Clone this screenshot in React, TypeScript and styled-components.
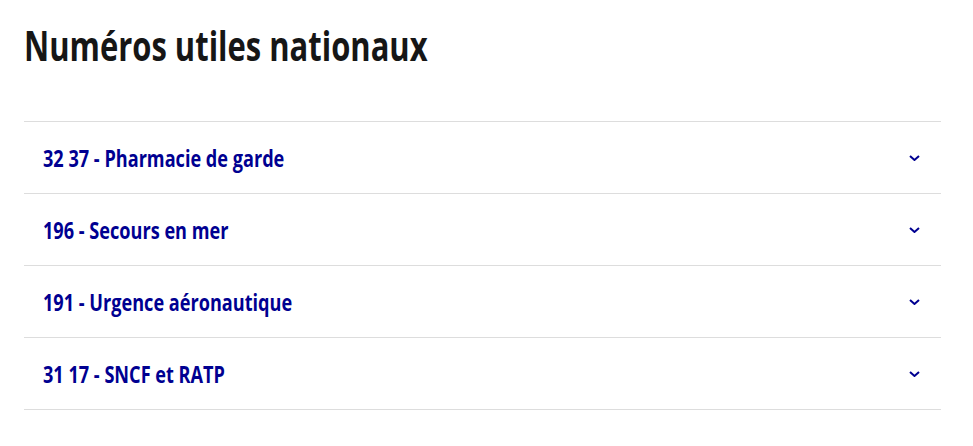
import React from "react";
import styled, { createGlobalStyle } from "styled-components";

const Global = createGlobalStyle`
  html, body { margin: 0; padding: 0; background: #ffffff; }
  body { font-family: "Open Sans", "Liberation Sans", sans-serif; }
`;

const Section = styled.section`
  padding: 21px 32px 0 24px;
`;

const Condensed = styled.span`
  display: inline-block;
  transform: scaleX(0.755);
  transform-origin: left center;
  white-space: nowrap;
`;

const Title = styled.h2`
  margin: 0 0 52px 0;
  font-size: 41px;
  line-height: 48px;
  font-weight: 700;
  color: #161616;
`;

const List = styled.div`
  display: flex;
  flex-direction: column;
  border-bottom: 1px solid #dddddd;
`;

const Row = styled.button`
  display: flex;
  align-items: center;
  justify-content: space-between;
  height: 72px;
  padding: 0 21px 0 19px;
  border: none;
  border-top: 1px solid #dddddd;
  background: transparent;
  font-family: inherit;
  font-size: 24px;
  line-height: 24px;
  font-weight: 700;
  color: #000091;
  text-align: left;
  cursor: pointer;
`;

const Chevron = styled.svg`
  width: 11px;
  height: 6px;
  flex: none;
`;

const items = [
  "32 37 - Pharmacie de garde",
  "196 - Secours en mer",
  "191 - Urgence aéronautique",
  "31 17 - SNCF et RATP",
];

export default function App() {
  return (
    <>
      <Global />
      <Section>
        <Title>
          <Condensed>Numéros utiles nationaux</Condensed>
        </Title>
        <List>
          {items.map((t) => (
            <Row key={t} type="button">
              <Condensed>{t}</Condensed>
              <Chevron viewBox="0 0 11 6" fill="none">
                <path d="M1 1 L5.5 5 L10 1" stroke="#000091" strokeWidth="2" />
              </Chevron>
            </Row>
          ))}
        </List>
      </Section>
    </>
  );
}
